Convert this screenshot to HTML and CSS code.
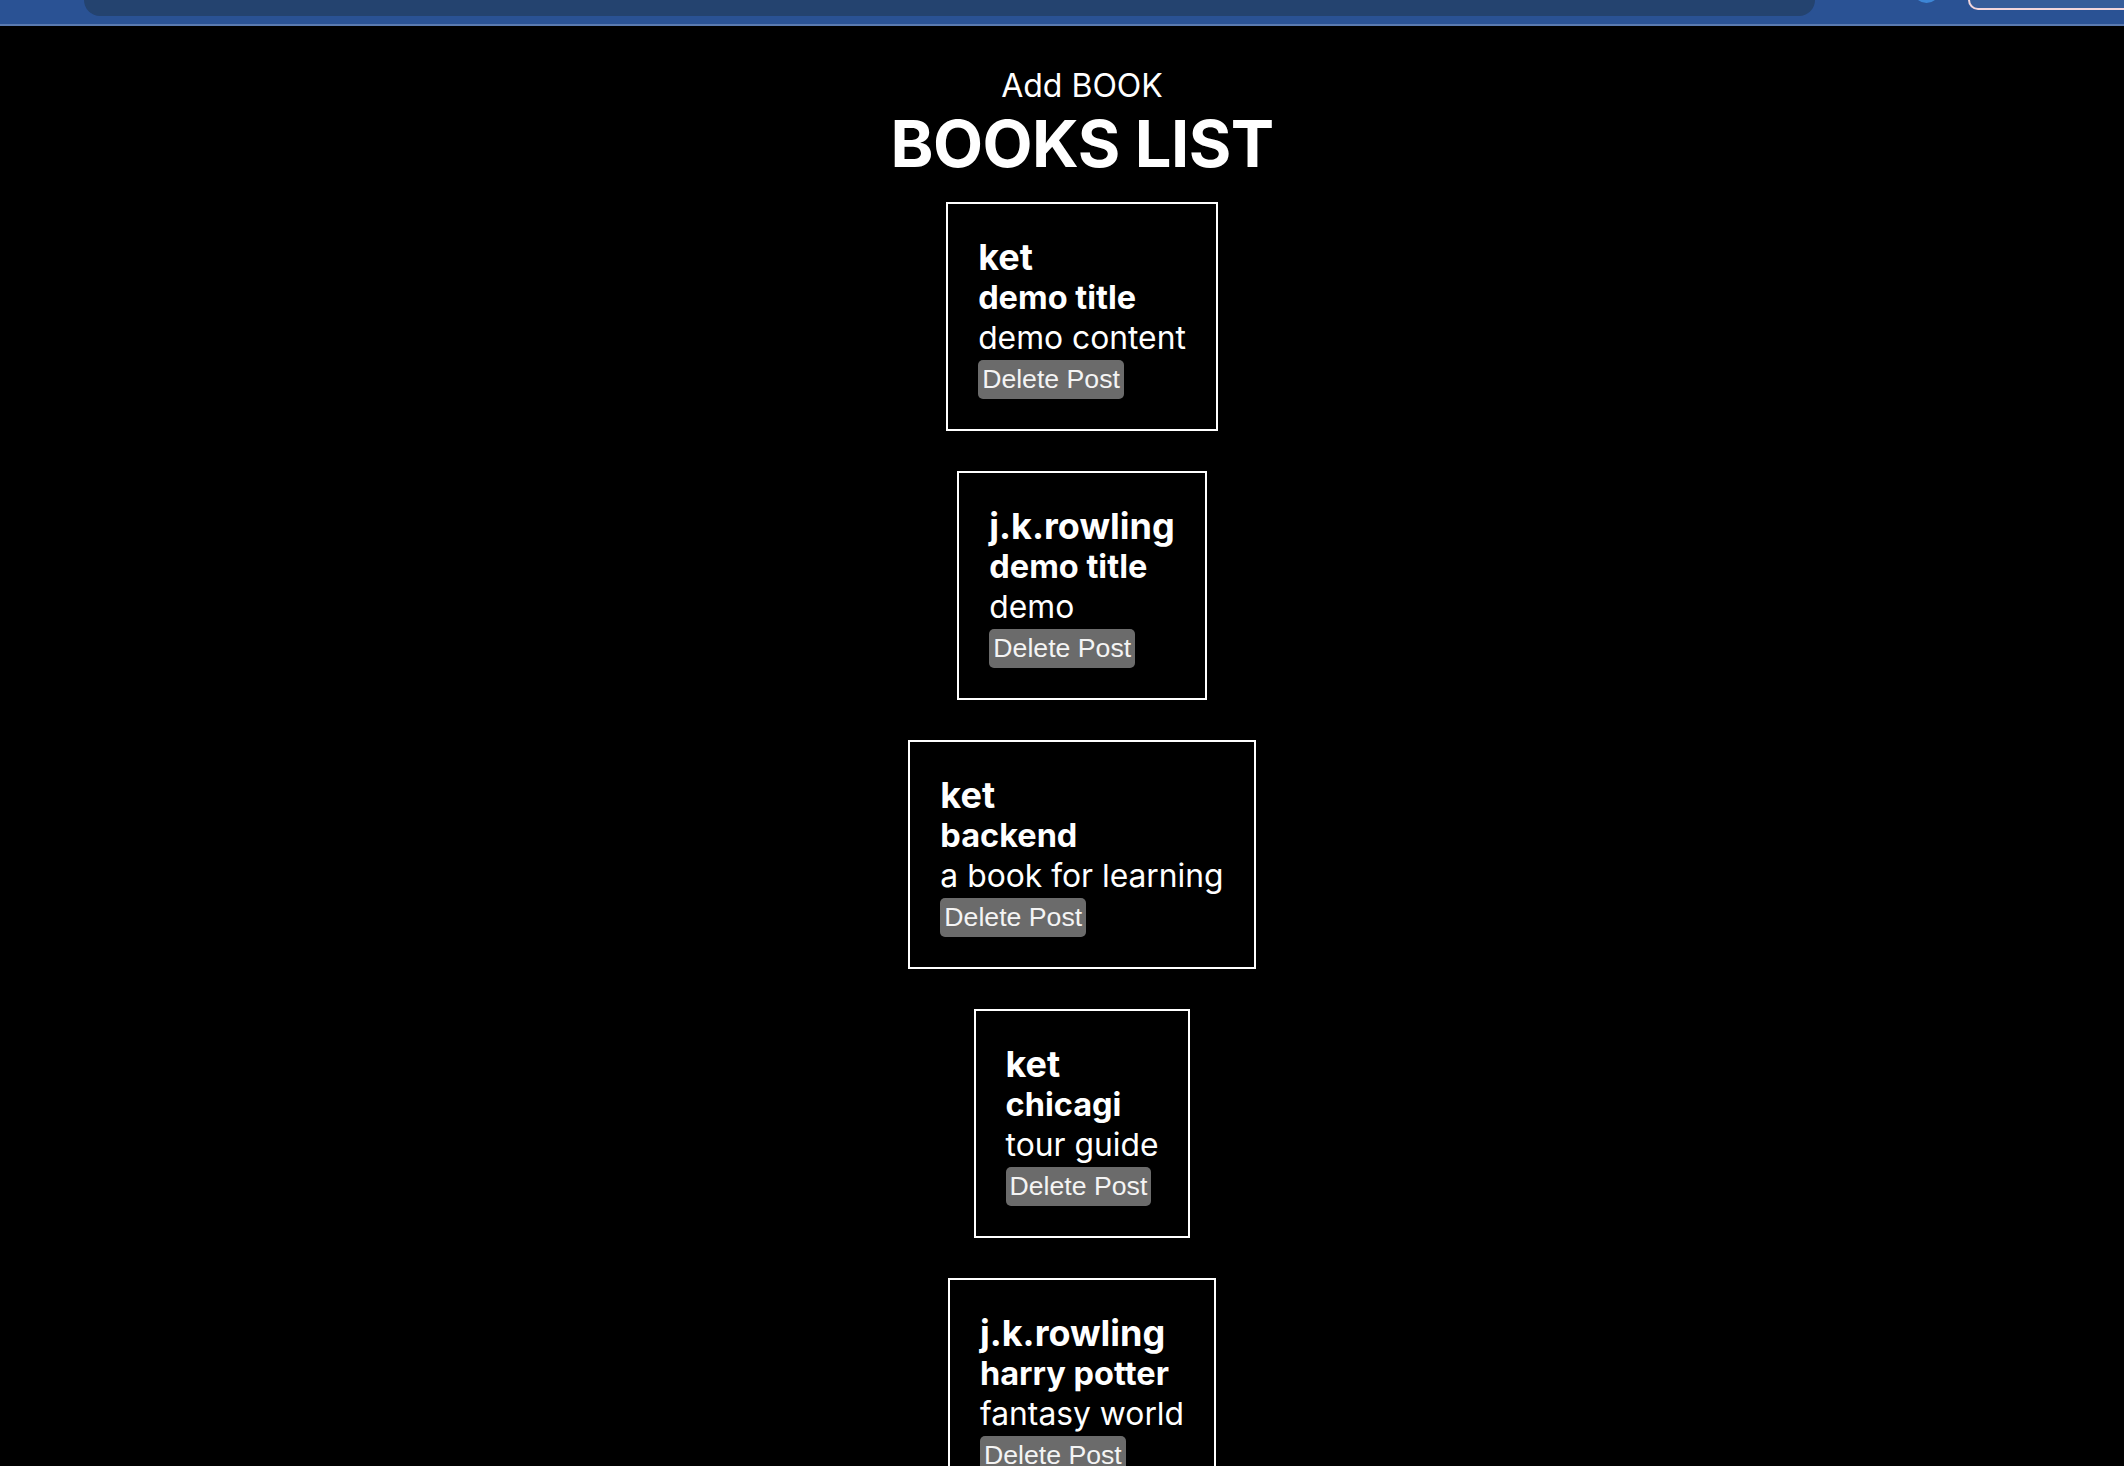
FILE: index.html
```html
<!DOCTYPE html>
<html lang="en">
<head>
<meta charset="utf-8">
<title>Books List</title>
<link rel="stylesheet" href="styles.css">
</head>
<body>
<div class="chrome">
  <div class="chrome-address"></div>
  <div class="chrome-dot"></div>
  <div class="chrome-tab"></div>
</div>
<main class="page">
  <a class="add-link">Add BOOK</a>
  <h1 class="page-title">BOOKS LIST</h1>
  <div class="book-list">
    <div class="book-card">
      <div class="book-author">ket</div>
      <div class="book-title">demo title</div>
      <div class="book-content">demo content</div>
      <button class="delete-btn">Delete Post</button>
    </div>
    <div class="book-card">
      <div class="book-author">j.k.rowling</div>
      <div class="book-title">demo title</div>
      <div class="book-content">demo</div>
      <button class="delete-btn">Delete Post</button>
    </div>
    <div class="book-card">
      <div class="book-author">ket</div>
      <div class="book-title">backend</div>
      <div class="book-content">a book for learning</div>
      <button class="delete-btn">Delete Post</button>
    </div>
    <div class="book-card">
      <div class="book-author">ket</div>
      <div class="book-title">chicagi</div>
      <div class="book-content">tour guide</div>
      <button class="delete-btn">Delete Post</button>
    </div>
    <div class="book-card">
      <div class="book-author">j.k.rowling</div>
      <div class="book-title">harry potter</div>
      <div class="book-content">fantasy world</div>
      <button class="delete-btn">Delete Post</button>
    </div>
  </div>
</main>
</body>
</html>
```
FILE: styles.css
```css
html, body {
  margin: 0;
  padding: 0;
  background: #000;
}

body {
  font-family: Inter, "Noto Sans", sans-serif;
  color: #fff;
  overflow: hidden;
}

.chrome {
  display: flex;
  align-items: flex-start;
  height: 24px;
  background: #2a5294;
  border-bottom: 2px solid #5a7ab0;
  padding-left: 84px;
  overflow: hidden;
}

.chrome-address {
  width: 1731px;
  height: 16px;
  background: #24436f;
  border-radius: 0 0 18px 18px;
}

.chrome-dot {
  width: 27px;
  height: 27px;
  margin-top: -24px;
  margin-left: 98px;
  border-radius: 50%;
  background: #3d86d6;
}

.chrome-tab {
  flex: 1;
  height: 8px;
  margin-left: 28px;
  background: #365d9a;
  border-left: 2px solid #f3d6dc;
  border-bottom: 2px solid #f3d6dc;
  border-bottom-left-radius: 14px;
}

.page {
  display: flex;
  flex-direction: column;
  align-items: center;
  padding: 40px 0 0 40px;
}

.add-link {
  font-size: 32px;
  line-height: 40px;
  font-weight: 400;
  color: #fff;
}

.page-title {
  margin: 3px 0 0;
  font-size: 65px;
  line-height: 70px;
  font-weight: 700;
  letter-spacing: -0.5px;
}

.book-list {
  display: flex;
  flex-direction: column;
  align-items: center;
  gap: 40px;
  margin-top: 23px;
}

.book-card {
  border: 2px solid #fff;
  padding: 32px 30px 30.5px;
  display: flex;
  flex-direction: column;
  align-items: flex-start;
}

.book-author {
  font-size: 36px;
  line-height: 42px;
  font-weight: 700;
}

.book-title {
  font-size: 32.5px;
  line-height: 40px;
  font-weight: 700;
}

.book-content {
  font-size: 31.8px;
  line-height: 40px;
  font-weight: 400;
}

.delete-btn {
  margin-top: 2px;
  font-family: "Liberation Sans", Arial, sans-serif;
  font-size: 26.67px;
  line-height: 30.5px;
  color: #f4f4f4;
  background: #6b6b6b;
  border: none;
  border-radius: 5px;
  padding: 4px 4px;
}
```
